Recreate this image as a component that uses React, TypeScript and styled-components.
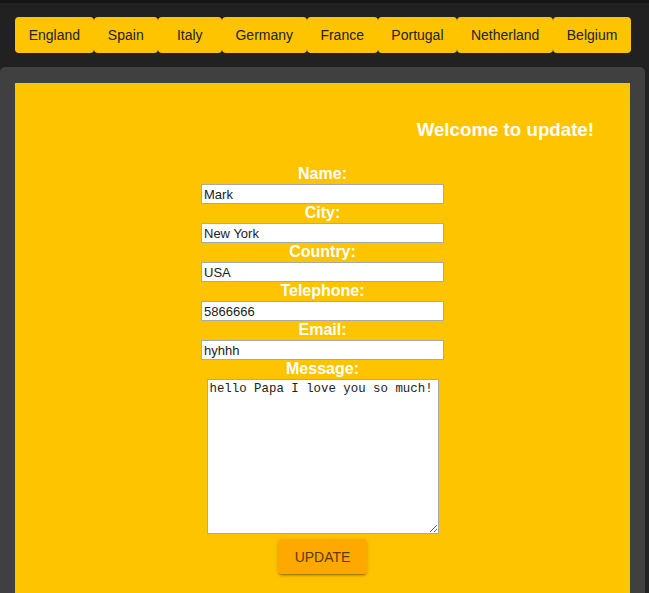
import React from "react";
import styled, { createGlobalStyle } from "styled-components";

const Global = createGlobalStyle`
  html, body { margin: 0; padding: 0; }
  body {
    background: #212121;
    font-family: "Liberation Sans", Arial, sans-serif;
  }
`;

const Page = styled.div`
  display: flex;
  flex-direction: column;
  min-height: 100vh;
  border-top: 3px solid #151515;
  box-sizing: border-box;
`;

const NavBar = styled.nav`
  display: flex;
  padding: 14px 15px 14px 15px;
`;

const NavButton = styled.button`
  height: 36px;
  min-width: 64px;
  padding: 0 13.7px;
  border: none;
  border-radius: 4px;
  background: #ffc400;
  color: #222;
  font-family: "Liberation Sans", Arial, sans-serif;
  font-size: 14px;
  cursor: pointer;
`;

const Panel = styled.main`
  flex: 1;
  margin-right: 4px;
  background: #404040;
  border-radius: 5px 5px 0 0;
  padding: 16px 15px 0 15px;
  display: flex;
`;

const Card = styled.section`
  flex: 1;
  background: #ffc400;
  padding: 36px 36px 40px 0;
  display: flex;
  flex-direction: column;
`;

const Title = styled.h3`
  margin: 0;
  text-align: right;
  color: #fff;
  font-size: 18.72px;
  font-weight: bold;
  line-height: 22px;
`;

const Form = styled.form`
  display: flex;
  flex-direction: column;
  align-items: center;
  margin-top: 24px;
  margin-left: 36px;
`;

const Label = styled.label`
  display: block;
  color: #fff;
  font-weight: bold;
  font-size: 16px;
  line-height: 18px;
  height: 18px;
`;

const Input = styled.input`
  box-sizing: border-box;
  width: 243px;
  height: 20px;
  margin: 1px 0 0 0;
  padding: 1px 2px;
  border: 1px solid #a9a9a9;
  background: #fff;
  color: #222;
  font-family: "Liberation Sans", Arial, sans-serif;
  font-size: 13px;
  outline: none;
`;

const TextArea = styled.textarea`
  box-sizing: border-box;
  width: 232px;
  height: 155px;
  margin: 1px 0 0 0;
  padding: 2px 2px;
  border: 1px solid #a9a9a9;
  background: #fff;
  color: #222;
  font-family: "Liberation Mono", "DejaVu Sans Mono", monospace;
  font-size: 12.4px;
  line-height: 15px;
  outline: none;
`;

const SubmitButton = styled.button`
  margin-top: 5px;
  min-width: 64px;
  height: 35px;
  padding: 0 17px;
  border: none;
  border-radius: 4px;
  background: #ffa800;
  color: #5c3a00;
  font-family: "Liberation Sans", Arial, sans-serif;
  font-size: 14px;
  box-shadow: 0 3px 1px -2px rgba(0,0,0,0.2), 0 2px 2px 0 rgba(0,0,0,0.14), 0 1px 5px 0 rgba(0,0,0,0.12);
  cursor: pointer;
`;

const countries = ["England", "Spain", "Italy", "Germany", "France", "Portugal", "Netherland", "Belgium"];

const fields = [
  { label: "Name:", value: "Mark" },
  { label: "City:", value: "New York" },
  { label: "Country:", value: "USA" },
  { label: "Telephone:", value: "5866666" },
  { label: "Email:", value: "hyhhh" },
];

export default function App() {
  return (
    <>
      <Global />
      <Page>
        <NavBar>
          {countries.map((c) => (
            <NavButton key={c}>{c}</NavButton>
          ))}
        </NavBar>
        <Panel>
          <Card>
            <Title>Welcome to update!</Title>
            <Form onSubmit={(e) => e.preventDefault()}>
              {fields.map((f) => (
                <React.Fragment key={f.label}>
                  <Label>{f.label}</Label>
                  <Input defaultValue={f.value} />
                </React.Fragment>
              ))}
              <Label>Message:</Label>
              <TextArea defaultValue="hello Papa I love you so much!" />
              <SubmitButton type="submit">UPDATE</SubmitButton>
            </Form>
          </Card>
        </Panel>
      </Page>
    </>
  );
}
